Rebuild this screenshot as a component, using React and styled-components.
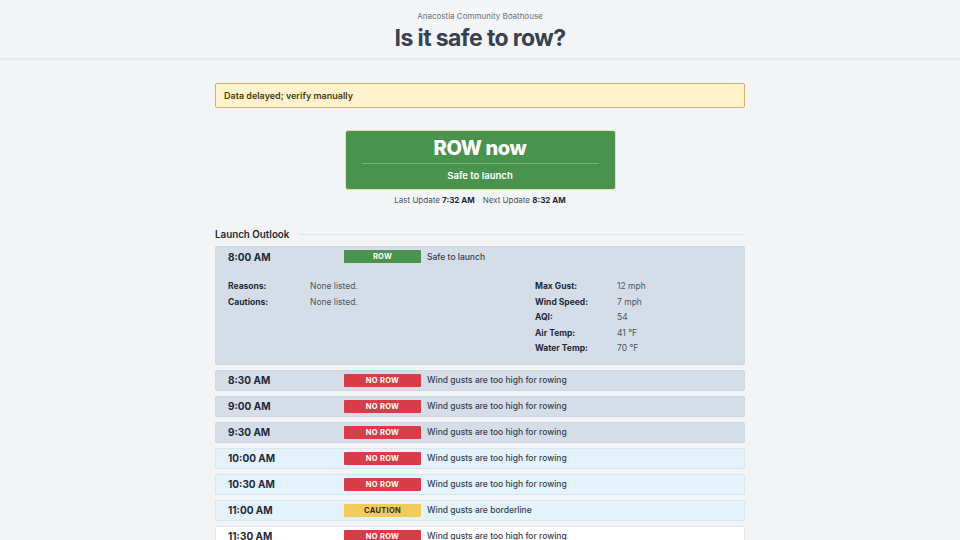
import React from "react";
import styled, { createGlobalStyle } from "styled-components";

const GlobalStyle = createGlobalStyle`
  html, body {
    margin: 0;
    padding: 0;
    background: #f3f4f6;
    font-family: "Inter", "Liberation Sans", sans-serif;
    color: #1f2937;
  }
  * { box-sizing: border-box; }
`;

const slots = [
  { time: "8:00 AM", status: "row", note: "Safe to launch", open: true },
  { time: "8:30 AM", status: "no", note: "Wind gusts are too high for rowing", tone: "slate" },
  { time: "9:00 AM", status: "no", note: "Wind gusts are too high for rowing", tone: "slate" },
  { time: "9:30 AM", status: "no", note: "Wind gusts are too high for rowing", tone: "slate" },
  { time: "10:00 AM", status: "no", note: "Wind gusts are too high for rowing", tone: "sky" },
  { time: "10:30 AM", status: "no", note: "Wind gusts are too high for rowing", tone: "sky" },
  { time: "11:00 AM", status: "caution", note: "Wind gusts are borderline", tone: "sky" },
  { time: "11:30 AM", status: "no", note: "Wind gusts are too high for rowing", tone: "white" },
];

const conditions = [
  ["Max Gust:", "12 mph"],
  ["Wind Speed:", "7 mph"],
  ["AQI:", "54"],
  ["Air Temp:", "41 °F"],
  ["Water Temp:", "70 °F"],
];

const badgeText = { row: "ROW", no: "NO ROW", caution: "CAUTION" };

function App() {
  return (
    <>
      <GlobalStyle />
      <Header>
        <Club>Anacostia Community Boathouse</Club>
        <Title>Is it safe to row?</Title>
      </Header>
      <Main>
        <Alert>Data delayed; verify manually</Alert>
        <StatusCard>
          <Verdict>ROW now</Verdict>
          <Reason>Safe to launch</Reason>
        </StatusCard>
        <Updated>
          Last Update <b>7:32 AM</b>
          <Gap />
          Next Update <b>8:32 AM</b>
        </Updated>
        <SectionTitle>Launch Outlook</SectionTitle>
        <List>
          {slots.map((s) => (
            <Slot key={s.time} $tone={s.open ? "slate" : s.tone} $open={s.open}>
              <SlotHead>
                <Time>{s.time}</Time>
                <Badge $status={s.status}>{badgeText[s.status]}</Badge>
                <Note>{s.note}</Note>
              </SlotHead>
              {s.open && (
                <Details>
                  <Facts>
                    <dt>Reasons:</dt>
                    <dd>None listed.</dd>
                    <dt>Cautions:</dt>
                    <dd>None listed.</dd>
                  </Facts>
                  <Facts>
                    {conditions.map(([k, v]) => (
                      <React.Fragment key={k}>
                        <dt>{k}</dt>
                        <dd>{v}</dd>
                      </React.Fragment>
                    ))}
                  </Facts>
                </Details>
              )}
            </Slot>
          ))}
        </List>
      </Main>
    </>
  );
}

const Header = styled.header`
  background: #f4f5f7;
  border-bottom: 1px solid #e2e4e8;
  box-shadow: 0 1px 2px rgba(0, 0, 0, 0.04);
  padding: 10px 0 6px;
  text-align: center;
`;

const Club = styled.div`
  font-size: 8px;
  color: #6b7280;
  line-height: 12px;
`;

const Title = styled.h1`
  margin: 2px 0 0;
  font-size: 23px;
  line-height: 28px;
  font-weight: 700;
  color: #374151;
  letter-spacing: -0.6px;
`;

const Main = styled.main`
  width: 530px;
  margin: 0 auto;
  padding-top: 24px;
  display: flex;
  flex-direction: column;
`;

const Alert = styled.div`
  background: #fef3cd;
  border: 1px solid #cdb46a;
  border-radius: 2px;
  color: #4a3b0c;
  font-size: 9px;
  font-weight: 600;
  height: 25px;
  padding: 0 8px;
  display: flex;
  align-items: center;
`;

const StatusCard = styled.div`
  align-self: center;
  margin-top: 22px;
  width: 271px;
  height: 60px;
  background: #4a934f;
  border: 1px solid #dfe5a8;
  border-radius: 3px;
  padding: 0 16px;
  display: flex;
  flex-direction: column;
  align-items: stretch;
  color: #fff;
  text-align: center;
`;

const Verdict = styled.div`
  font-size: 20px;
  font-weight: 800;
  line-height: 22px;
  padding: 6px 0 4px;
  border-bottom: 1px solid rgba(255, 255, 255, 0.25);
  letter-spacing: -0.4px;
`;

const Reason = styled.div`
  font-size: 9.5px;
  font-weight: 600;
  line-height: 12px;
  padding-top: 6px;
`;

const Updated = styled.div`
  margin-top: 5px;
  text-align: center;
  font-size: 8px;
  color: #4b5563;
  b {
    color: #1f2937;
    font-weight: 700;
  }
`;

const Gap = styled.span`
  display: inline-block;
  width: 8px;
`;

const SectionTitle = styled.h2`
  margin: 24px 0 6px;
  font-size: 9.8px;
  font-weight: 600;
  color: #1f2937;
  display: flex;
  align-items: center;
  gap: 10px;
  &::after {
    content: "";
    flex: 1;
    height: 1px;
    background: #e2e5ea;
  }
`;

const List = styled.div`
  display: flex;
  flex-direction: column;
  gap: 5px;
`;

const tones = {
  slate: "#d5dee8",
  sky: "#e3f2fb",
  white: "#ffffff",
};

const Slot = styled.div`
  background: ${(p) => tones[p.$tone]};
  border: 1px solid ${(p) => (p.$tone === "sky" ? "#d8e7f0" : p.$tone === "white" ? "#e2e5ea" : "#cfd8e2")};
  border-radius: 2px;
  padding: ${(p) => (p.$open ? "0 12px 5px" : "0 12px")};
`;

const SlotHead = styled.div`
  display: flex;
  align-items: center;
  height: 19px;
`;

const Time = styled.div`
  width: 116px;
  font-size: 10px;
  font-weight: 700;
  color: #1f2937;
`;

const badgeColors = {
  row: ["#4a934f", "#ffffff"],
  no: ["#d63d48", "#ffffff"],
  caution: ["#f2cb5b", "#3b2f0a"],
};

const Badge = styled.div`
  width: 77px;
  height: 13px;
  border-radius: 1px;
  background: ${(p) => badgeColors[p.$status][0]};
  color: ${(p) => badgeColors[p.$status][1]};
  font-size: 7.5px;
  font-weight: 700;
  letter-spacing: 0.3px;
  display: flex;
  align-items: center;
  justify-content: center;
  margin-right: 6px;
`;

const Note = styled.div`
  font-size: 8.5px;
  font-weight: 500;
  color: #374151;
`;

const Details = styled.div`
  margin-top: 15px;
  display: grid;
  grid-template-columns: 1fr 197px;
`;

const Facts = styled.dl`
  margin: 0;
  display: grid;
  grid-template-columns: 82px 1fr;
  grid-auto-rows: 15.5px;
  align-content: start;
  font-size: 8.5px;
  dt {
    font-weight: 700;
    color: #1f2937;
  }
  dd {
    margin: 0;
    color: #4b5563;
  }
`;

export default App;
